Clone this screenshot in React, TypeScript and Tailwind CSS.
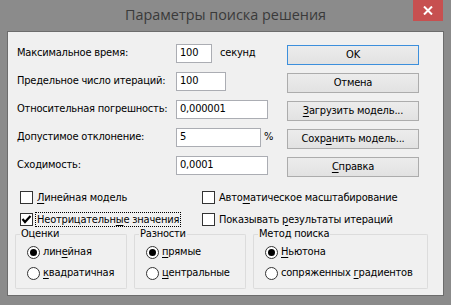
import React from 'react';

const U: React.FC<{ children: React.ReactNode }> = ({ children }) => (
  <span className="underline underline-offset-[2px]">{children}</span>
);

const fields = [
  { label: 'Максимальное время:', value: '100', w: 'w-[36px]', unit: 'секунд', gap: 'ml-[8px]' },
  { label: 'Предельное число итераций:', value: '100', w: 'w-[50px]', unit: '', gap: '' },
  { label: 'Относительная погрешность:', value: '0,000001', w: 'w-[92px]', unit: '', gap: '' },
  { label: 'Допустимое отклонение:', value: '5', w: 'w-[85px]', unit: '%', gap: 'ml-[3px]' },
  { label: 'Сходимость:', value: '0,0001', w: 'w-[92px]', unit: '', gap: '' },
];

const Checkbox: React.FC<{ checked?: boolean; focused?: boolean; children: React.ReactNode }> = ({
  checked,
  focused,
  children,
}) => (
  <div className="flex items-center h-[18px]">
    <div className="w-[13px] h-[13px] border border-[#333333] bg-white flex items-center justify-center shrink-0">
      {checked && (
        <svg width="11" height="11" viewBox="0 0 11 11">
          <path d="M1.5 5 L4 8 L9.5 2" fill="none" stroke="#000" strokeWidth="2.2" />
        </svg>
      )}
    </div>
    <div
      className={`ml-[2px] px-[1px] leading-[13px] border ${
        focused ? 'border-dotted border-black' : 'border-transparent'
      }`}
    >
      {children}
    </div>
  </div>
);

const Radio: React.FC<{ checked?: boolean; children: React.ReactNode }> = ({ checked, children }) => (
  <div className="flex items-center h-[21px]">
    <div className="w-[13px] h-[13px] rounded-full border border-[#333333] bg-white flex items-center justify-center shrink-0">
      {checked && <div className="w-[7px] h-[7px] rounded-full bg-black" />}
    </div>
    <span className="ml-[3px]">{children}</span>
  </div>
);

// group box: top edge is drawn in two pieces either side of the caption
const Group: React.FC<{ title: string; w: string; children: React.ReactNode }> = ({ title, w, children }) => (
  <div className={`${w} flex flex-col`}>
    <div className="flex h-[12px]">
      <div className="w-[5px] mt-[6px] border-l border-t border-[#dcdcdc] rounded-tl-[2px]" />
      <span className="px-[1px] leading-[12px]">{title}</span>
      <div className="flex-1 mt-[6px] border-r border-t border-[#dcdcdc] rounded-tr-[2px]" />
    </div>
    <div className="border-l border-r border-b border-[#dcdcdc] rounded-b-[2px] pl-[11px] pt-[2px] pb-[4px]">
      {children}
    </div>
  </div>
);

const Button: React.FC<{ primary?: boolean; children: React.ReactNode }> = ({ primary, children }) => (
  <div
    className={`h-[20px] w-[132px] flex items-center justify-center border bg-gradient-to-b from-[#ececec] to-[#e2e2e2] ${
      primary ? 'border-[#3c8fdc]' : 'border-[#acacac]'
    }`}
  >
    {children}
  </div>
);

export default function App() {
  return (
    <div
      className="w-[451px] h-[305px] bg-[#8b8b8b] text-[11px] text-black tracking-[-0.2px]"
      style={{ fontFamily: '"DejaVu Sans Condensed", "Liberation Sans", sans-serif' }}
    >
      {/* title bar */}
      <div className="h-[31px] grid grid-cols-[1fr_auto_1fr]">
        <div />
        <div
          className="pt-[4px] text-[14.4px] text-[#3a3a3a] leading-[22px] tracking-normal"
          style={{ fontFamily: '"Open Sans", "Noto Sans", sans-serif' }}
        >
          Параметры поиска решения
        </div>
        <div className="flex justify-end items-start pr-[8px]">
          <div className="w-[30px] h-[21px] bg-[#c75050] flex items-center justify-center">
            <svg width="10" height="9" viewBox="0 0 10 9">
              <path d="M1 0.5 L9 8.5 M9 0.5 L1 8.5" stroke="#fff" strokeWidth="2" />
            </svg>
          </div>
        </div>
      </div>

      {/* client area */}
      <div className="mx-[7px] h-[265px] border border-[#6c6c6c] bg-[#f0f0f0]">
        <div className="flex pt-[12px]">
          <div className="w-[279px] pl-[9px] flex flex-col gap-[9px]">
            {fields.map((f) => (
              <div key={f.label} className="flex items-center h-[19px]">
                <span className="w-[159px]">{f.label}</span>
                <div className={`${f.w} h-[19px] bg-white border border-[#abadb3] pl-[3px] flex items-center`}>
                  {f.value}
                </div>
                {f.unit && <span className={f.gap}>{f.unit}</span>}
              </div>
            ))}
          </div>
          <div className="mt-[1px] flex flex-col gap-[8px]">
            <Button primary>OK</Button>
            <Button>Отмена</Button>
            <Button>
              <U>З</U>агрузить модель...
            </Button>
            <Button>
              Сохр<U>а</U>нить модель...
            </Button>
            <Button>
              <U>С</U>правка
            </Button>
          </div>
        </div>

        <div className="mt-[11px] pl-[12px] grid grid-cols-[182px_1fr] gap-y-[4px]">
          <Checkbox>
            <U>Л</U>инейная модель
          </Checkbox>
          <Checkbox>
            Авто<U>м</U>атическое масштабирование
          </Checkbox>
          <Checkbox checked focused>
            Неотрицательн<U>ы</U>е значения
          </Checkbox>
          <Checkbox>
            Показывать <U>р</U>езультаты итераций
          </Checkbox>
        </div>

        <div className="pl-[7px] flex gap-[7px]">
          <Group title="Оценки" w="w-[112px]">
            <Radio checked>
              лин<U>е</U>йная
            </Radio>
            <Radio>
              <U>к</U>вадратичная
            </Radio>
          </Group>
          <Group title="Разности" w="w-[112px]">
            <Radio checked>
              <U>п</U>рямые
            </Radio>
            <Radio>
              <U>ц</U>ентральные
            </Radio>
          </Group>
          <Group title="Метод поиска" w="w-[175px]">
            <Radio checked>
              <U>Н</U>ьютона
            </Radio>
            <Radio>
              сопряженных <U>г</U>радиентов
            </Radio>
          </Group>
        </div>
      </div>
    </div>
  );
}
